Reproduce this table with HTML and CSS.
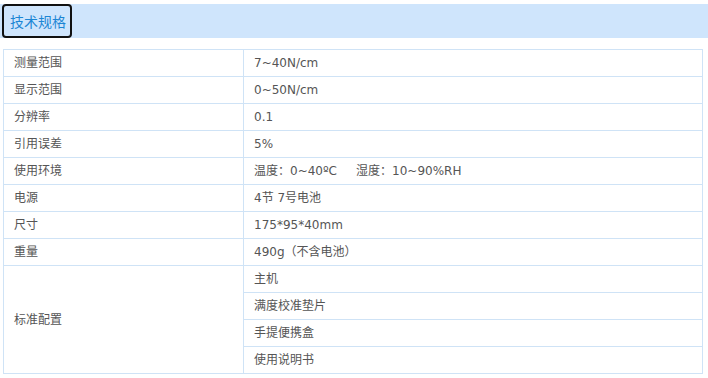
FILE: index.html
```html
<!DOCTYPE html>
<html lang="zh">
<head>
<meta charset="utf-8">
<link rel="stylesheet" href="styles.css">
</head>
<body>
<div class="tabbar"><span class="tab">技术规格</span></div>
<table class="spec">
<colgroup><col class="c1"><col class="c2"></colgroup>
<tr><td>测量范围</td><td>7~40N/cm</td></tr>
<tr><td>显示范围</td><td>0~50N/cm</td></tr>
<tr><td>分辨率</td><td>0.1</td></tr>
<tr><td>引用误差</td><td>5%</td></tr>
<tr><td>使用环境</td><td>温度：0~40ºC&nbsp;&nbsp;&nbsp;&nbsp;&nbsp;湿度：10~90%RH</td></tr>
<tr><td>电源</td><td>4节 7号电池</td></tr>
<tr><td>尺寸</td><td>175*95*40mm</td></tr>
<tr><td>重量</td><td>490g（不含电池）</td></tr>
<tr><td rowspan="4">标准配置</td><td>主机</td></tr>
<tr><td>满度校准垫片</td></tr>
<tr><td>手提便携盒</td></tr>
<tr><td>使用说明书</td></tr>
</table>
</body>
</html>
```
FILE: styles.css
```css
html, body { margin: 0; padding: 0; background: #fff; }
body {
  font-family: "DejaVu Sans", "Noto Sans CJK SC", sans-serif;
  color: #555;
  padding: 4px 0 0 0;
}
.tabbar {
  height: 34px;
  background: #cfe5fc;
  display: flex;
  align-items: stretch;
  padding-left: 2px;
}
.tab {
  box-sizing: border-box;
  border: 2px solid #111;
  border-radius: 4px;
  padding: 0 4px 0 6px;
  font-family: "Noto Sans CJK SC", sans-serif;
  font-size: 14px;
  line-height: 30px;
  color: #1c86d4;
  white-space: nowrap;
}
.spec {
  margin: 11px 0 0 3px;
  width: 700px;
  border-collapse: collapse;
  font-size: 12px;
  table-layout: fixed;
}
.c1 { width: 240px; }
.spec td {
  border: 1px solid #cfe3f6;
  height: 27px;
  padding: 0 0 0 10px;
  box-sizing: border-box;
  line-height: 16px;
  white-space: nowrap;
}
```
